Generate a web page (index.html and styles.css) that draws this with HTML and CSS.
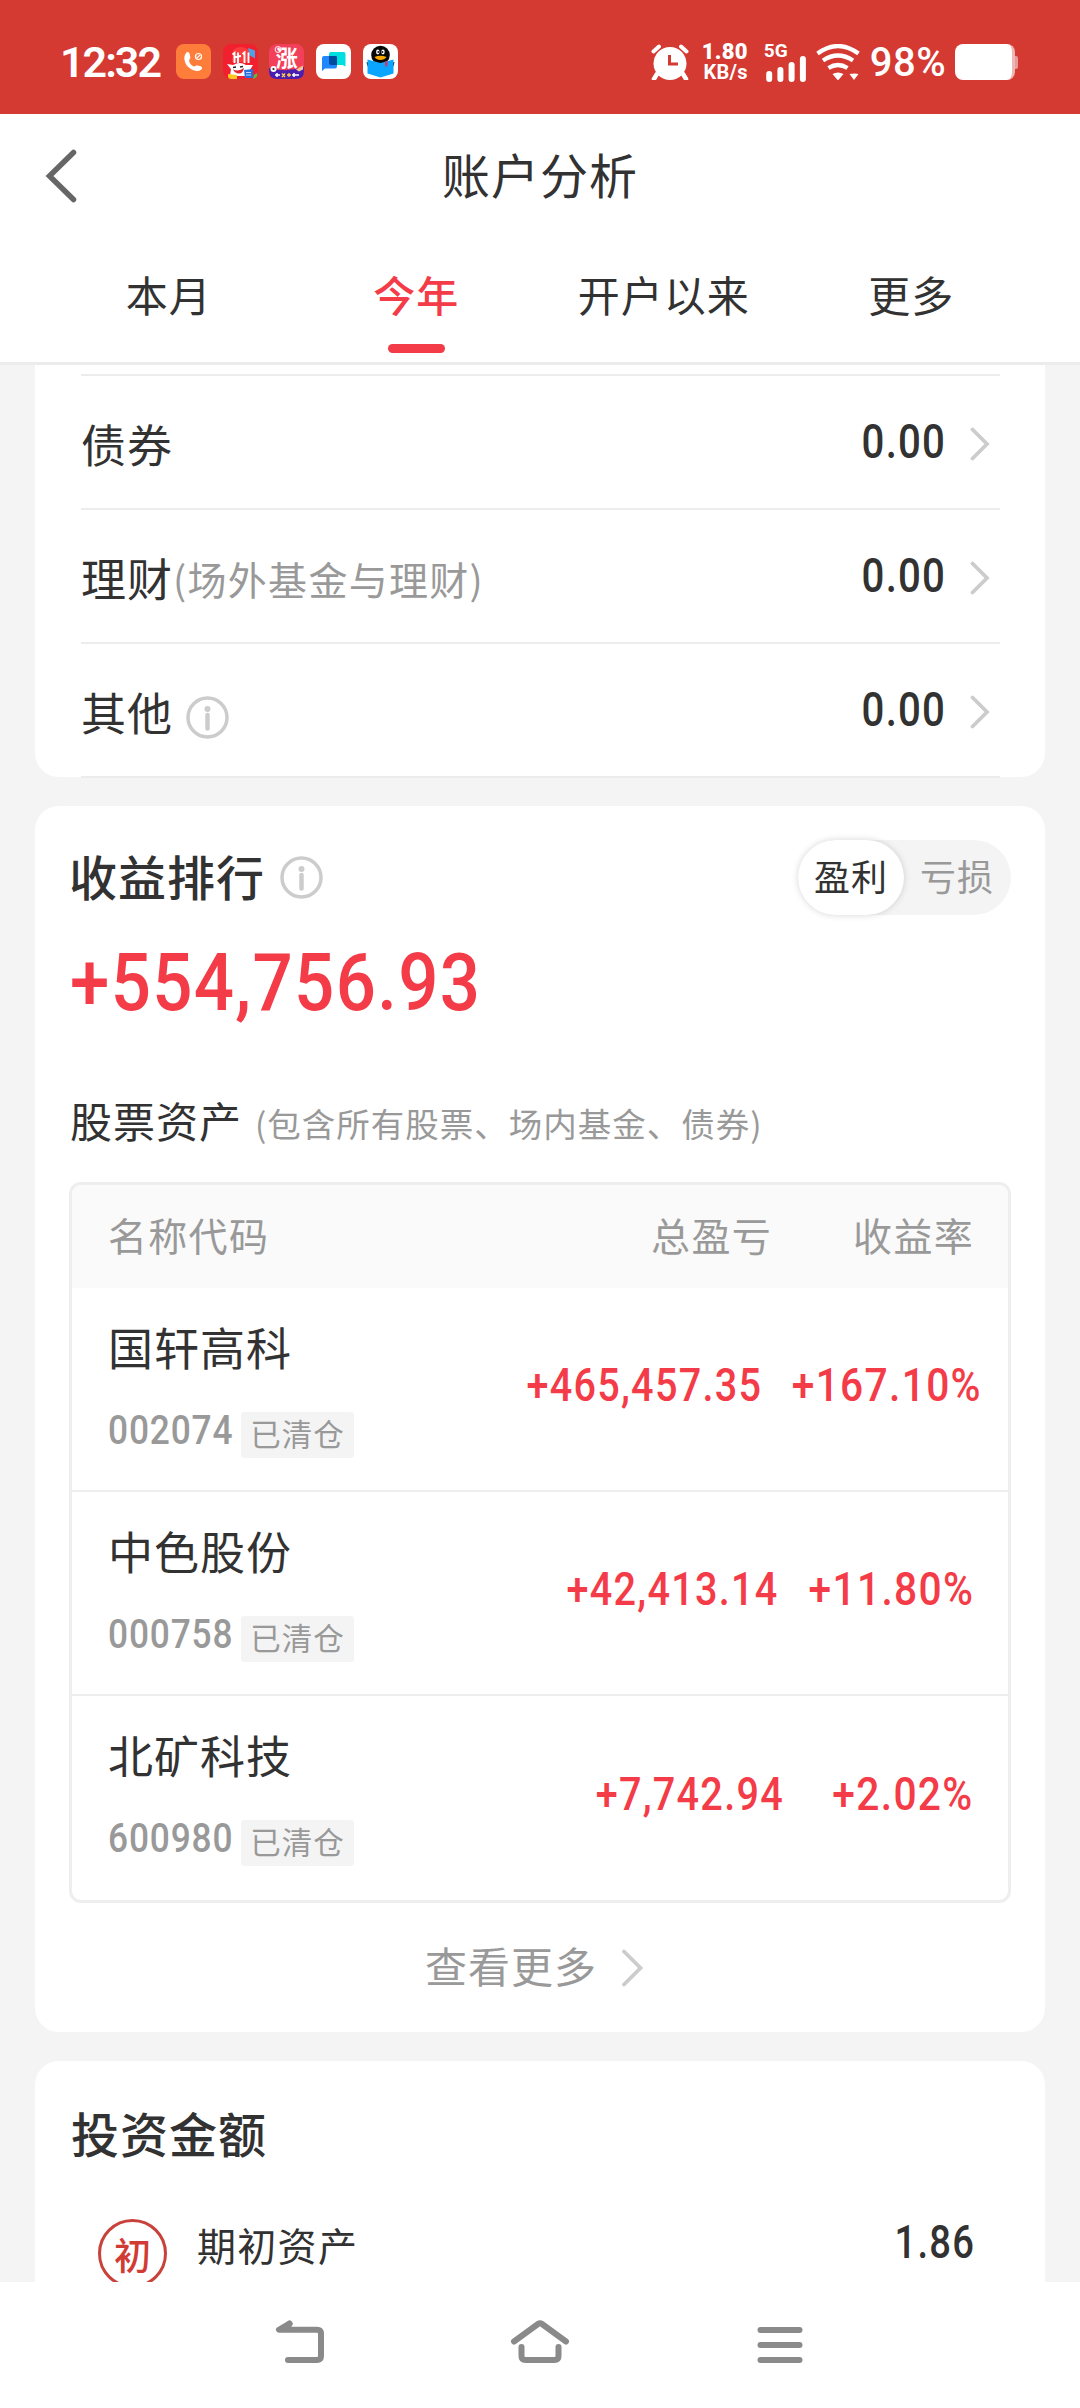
FILE: index.html
```html
<!DOCTYPE html>
<html lang="zh-CN">
<head>
<meta charset="utf-8">
<title>账户分析</title>
<link rel="stylesheet" href="styles.css">
</head>
<body>
<div class="screen">
  <header class="status">
    <span class="clock">12:32</span>
    <div class="apps">
      <svg viewBox="0 0 35 35"><rect width="35" height="35" rx="8" fill="#ff7d3a"/><path d="M10.500 8.500c1.700-1.100 2.900.2 3.300 1.900l.5 3.200c.1 1.500-1.500 2-1.200 3.300.6 2.800 2.600 4.800 5 5.500 1.200.3 2-1.300 3.300-1l3.300.9c1.600.7 1.900 2.300.5 3.400-2.800 2-7.200 1.500-11.300-1.400C8.300 20.800 6.500 12.400 10.500 8.500z" fill="#fff"/><circle cx="22.500" cy="12.500" r="3" fill="none" stroke="#fff" stroke-width="1.200"/><path d="M20.800 14.200l3.400-3.400" stroke="#fff" stroke-width="1.200"/></svg>
      <svg viewBox="0 0 35 35"><rect width="35" height="35" rx="8" fill="#f0202f"/><path d="M10 6q7-6 16 0v12H9z" fill="#ff3a3a"/><path d="M25 4l7 2.500v8l-5-3z" fill="#4aa3e8"/><path d="M9.500 10.500l2-1.500v10M15 19V8.500M19.500 10l2-1.500v10.500M25.500 19V8.500M12 13l6-1" stroke="#fff" stroke-width="1.900" fill="none"/><path d="M4 20l6 1q7-4 13 0l7 0-3 5 1 6H7l1-7z" fill="#fff"/><path d="M10 25.500q6 2.500 11-1.500-1 5.500-5 5.500t-6-4z" fill="#e0252d"/><path d="M10 23.500l3-.5M17 23l3-.5" stroke="#222" stroke-width="1.500"/><path d="M5 30l9 1v4H8q-3 0-3-3z" fill="#ffc820"/><path d="M21 26l9-1v9h-8z" fill="#2a6fe0"/><path d="M23 28.500h5M23 31h5" stroke="#bcd8ff"/><path d="M31 31l3-2q1 5-4 6z" fill="#55c040"/></svg>
      <svg viewBox="0 0 35 35"><rect width="35" height="35" rx="8" fill="#f2405a"/><path d="M0 24q17 5 35-1v4q0 8-8 8H8q-8 0-8-8z" fill="#4a1fb0"/><circle cx="9" cy="5.500" r="2.800" fill="none" stroke="#ffd0d4" stroke-width="1.200"/><text x="6.800" y="22" class="icon-word">涨</text><circle cx="4.500" cy="25" r="3" fill="#fff"/><circle cx="4.500" cy="25" r="1.100" fill="#222"/><path d="M27 25.500l7-4v4l-4 2z" fill="#ffc58a"/><path d="M6 31h5M23 31h7M8 29v4M25 29v4" stroke="#fff" stroke-width="1.500"/><path d="M13 29.500l3 3.500M16 29.500l-3 3.500M18 31h4M20 29v4" stroke="#ffd23c" stroke-width="1.300"/></svg>
      <svg viewBox="0 0 35 35"><rect width="35" height="35" rx="8" fill="#fff"/><path d="M15 8h12.500q2 0 2 2v12.500l-3-1.500H15q-2 0-2-2v-9q0-2 2-2z" fill="#00dfe0"/><path d="M8 12h13v10q0 2.500-2 2.500H9L6 27V14q0-2 2-2z" fill="#2187ff"/><path d="M13 12h6.500q1.500 0 1.500 1.500V21h-6q-2 0-2-2z" fill="#004b9b"/></svg>
      <svg viewBox="0 0 35 35"><rect width="35" height="35" rx="8" fill="#fff"/><circle cx="17.500" cy="11" r="9.300" fill="#080808"/><path d="M3.500 18l3 1v4l-2-1zM31.500 18l-3 1v4l2-1z" fill="#080808"/><ellipse cx="14.800" cy="8" rx="1.700" ry="2.400" fill="#fff"/><ellipse cx="20" cy="8" rx="1.700" ry="2.400" fill="#fff"/><circle cx="15.300" cy="8" r=".9" fill="#111"/><circle cx="19.500" cy="8" r=".9" fill="#111"/><path d="M11.500 13q6-2.500 12 0-2 3-6 3t-6-3z" fill="#ffa800"/><path d="M4.500 15.500l13 3.500 13-3.500v14l-13 4-13-4z" fill="#0aa5ff"/><path d="M22 17.500l2.500-.7v6l-1.200-1-1.300 1.500z" fill="#c43b72"/></svg>
    </div>
    <svg class="alarm" viewBox="0 0 38 36"><circle cx="19" cy="19.500" r="16.500" fill="#fff"/><path d="M6 30l-3 5M32 30l3 5" stroke="#fff" stroke-width="4.500" stroke-linecap="round"/><path d="M2.500 7.500L8 2.500M35.500 7.500L30 2.500" stroke="#fff" stroke-width="4" stroke-linecap="round"/><path d="M18.500 11v9H27" fill="none" stroke="#d43932" stroke-width="3"/></svg>
    <div class="speed"><b>1.80</b><span>KB/s</span></div>
    <div class="cell"><b>5G</b><svg viewBox="0 0 41 26"><path d="M3.200 18v5M14.400 14v9M25.600 9v14M36.900 3v20" stroke="#fff" stroke-width="6" stroke-linecap="round"/></svg></div>
    <svg class="wifi" viewBox="0 0 44 36"><g fill="none" stroke="#fff" stroke-width="4.200"><path d="M1.500 9.500Q22-5.500 42.500 9.500"/><path d="M7 16.500q15-10 30 0"/><path d="M12.500 24q9.500-6 19 0"/></g><path d="M16.500 30q5.500-3 11 0l-5.500 6.500zM33.500 30q5-1 9 0l-4.500 6z" fill="#fff"/></svg>
    <span class="percent">98%</span>
    <div class="battery"></div>
  </header>

  <div class="titlebar">
    <svg class="back" viewBox="0 0 32 54"><path d="M28.500 3.500L4.500 27l24 23.500" fill="none" stroke="#666" stroke-width="5.500" stroke-linecap="round"/></svg>
    <h1>账户分析</h1>
  </div>
  <nav class="tabs">
    <a>本月</a><a class="on">今年</a><a>开户以来</a><a>更多</a>
  </nav>

  <main class="content">
    <section class="card assets">
      <div class="asset"><span class="name">债券</span><span class="num">0.00</span><svg class="go" viewBox="0 0 20 34"><path d="M2.500 2.500L17 17 2.500 31.500"/></svg></div>
      <div class="asset"><span class="name">理财</span><span class="hint">(场外基金与理财)</span><span class="num">0.00</span><svg class="go" viewBox="0 0 20 34"><path d="M2.500 2.500L17 17 2.500 31.500"/></svg></div>
      <div class="asset"><span class="name">其他</span><svg class="info" viewBox="0 0 43 43"><circle cx="21.500" cy="21.500" r="19.500"/><path d="M21.500 19v13.500"/><circle class="dot" cx="21.500" cy="13" r="3"/></svg><span class="num">0.00</span><svg class="go" viewBox="0 0 20 34"><path d="M2.500 2.500L17 17 2.500 31.500"/></svg></div>
    </section>

    <section class="card rank">
      <div class="rank-head">
        <h2>收益排行</h2>
        <svg class="info" viewBox="0 0 43 43"><circle cx="21.500" cy="21.500" r="19.500"/><path d="M21.500 19v13.500"/><circle class="dot" cx="21.500" cy="13" r="3"/></svg>
        <div class="toggle"><span class="on">盈利</span><span>亏损</span></div>
      </div>
      <div class="total"><span class="num">+554,756.93</span></div>
      <div class="sub"><h3>股票资产</h3><span>(包含所有股票、场内基金、债券)</span></div>
      <div class="table">
        <div class="thead"><span>名称代码</span><span>总盈亏</span><span>收益率</span></div>
        <div class="row">
          <div class="stock"><p>国轩高科</p><div><span class="code">002074</span><em>已清仓</em></div></div>
          <div class="gain wide"><span class="num">+465,457.35</span></div><div class="rate wide"><span class="num">+167.10%</span></div>
        </div>
        <div class="row">
          <div class="stock"><p>中色股份</p><div><span class="code">000758</span><em>已清仓</em></div></div>
          <div class="gain mid"><span class="num">+42,413.14</span></div><div class="rate"><span class="num">+11.80%</span></div>
        </div>
        <div class="row">
          <div class="stock"><p>北矿科技</p><div><span class="code">600980</span><em>已清仓</em></div></div>
          <div class="gain"><span class="num">+7,742.94</span></div><div class="rate"><span class="num">+2.02%</span></div>
        </div>
      </div>
      <div class="more"><span>查看更多</span><svg class="go" viewBox="0 0 23 38"><path d="M3 2.500L19.500 19 3 35.500"/></svg></div>
    </section>

    <section class="card invest">
      <h2>投资金额</h2>
      <div class="item"><span class="badge">初</span><span class="label">期初资产</span><span class="num">1.86</span></div>
    </section>
  </main>

  <footer class="sysnav">
    <svg viewBox="0 0 60 44"><path d="M19.500 4.500L9 10.800H47q4 0 4 4V37q0 4-4 4H18"/><path d="M19.500 5L16 10"/></svg>
    <svg viewBox="0 0 60 44"><path d="M4 22.500L28 5q2-1.500 4 0L56 22.500M11.500 28V37q0 4 4 4h29q4 0 4-4V28"/></svg>
    <svg viewBox="0 0 60 44"><path d="M10.500 11h39M10.500 26h39M10.500 41h39"/></svg>
  </footer>
</div>
</body>
</html>
```
FILE: styles.css
```css
* { box-sizing: border-box; margin: 0; padding: 0; }
body { background: #fff; color: #323232; font-family: "Noto Sans CJK SC", sans-serif; }
h1, h2, h3, em { font-style: normal; font-weight: 400; }
svg { display: block; flex: none; }
span, h1, h2, h3, p, a { white-space: nowrap; }
.screen { width: 1080px; height: 2408px; display: flex; flex-direction: column; overflow: hidden; }

.status { height: 114px; flex: none; background: #d43932; color: #fff; display: flex; align-items: flex-start; padding: 44px 60px 0 60px; font-family: Roboto, sans-serif; }
.clock { width: 116px; font-size: 43px; line-height: 36px; font-weight: 600; letter-spacing: -2px; }
.apps { display: flex; gap: 11.700px; }
.apps svg { width: 35px; height: 35px; overflow: visible; }
.icon-word { font: 700 22px "Noto Sans CJK SC", sans-serif; fill: #fff; }
.alarm { width: 38px; height: 36px; margin-left: 253px; }
.speed { width: 46px; margin-left: 13px; display: flex; flex-direction: column; align-items: flex-end; font-size: 22px; line-height: 20px; font-weight: 700; margin-top: -2px; letter-spacing: .3px; }
.speed span { font-size: 20px; }
.cell { width: 42px; margin-left: 16px; margin-top: -2px; }
.cell b { display: block; font-size: 19px; line-height: 18px; }
.cell svg { width: 41px; height: 26px; margin: -4px 0 0 2px; }
.wifi { width: 44px; height: 36px; margin-left: 10px; }
.percent { width: 86px; margin-left: 10px; font-size: 40px; line-height: 37px; font-weight: 500; letter-spacing: .5px; margin-right: -1px; }
.battery { width: 60px; height: 36px; flex: none; border-radius: 8px; background: #fff; border-right: 3px solid #efb7b4; position: relative; }
.battery::after { content: ""; position: absolute; right: -6px; top: 12px; width: 3px; height: 13px; background: #e69c98; border-radius: 0 2px 2px 0; }

.titlebar { height: 124px; flex: none; display: grid; grid-template-columns: 76px 1fr 76px; align-items: center; }
.back { width: 32px; height: 54px; margin-left: 45px; }
h1 { text-align: center; font-size: 48px; letter-spacing: 1px; padding-bottom: 6px; }
.tabs { height: 127px; flex: none; border-bottom: 3px solid #ececec; padding: 0 45px; display: grid; grid-template-columns: repeat(4, 1fr); }
.tabs a { display: flex; flex-direction: column; align-items: center; font-size: 42px; letter-spacing: 1px; line-height: 60px; padding-top: 26px; }
.tabs .on { color: #f43b48; font-weight: 500; }
.tabs .on::after { content: ""; width: 57px; height: 9px; border-radius: 5px; background: #f43b48; margin-top: 20px; }

.content { flex: 1; min-height: 0; overflow: hidden; background: #f4f4f4; padding: 0 35px; display: flex; flex-direction: column; gap: 29px; }
.card { background: #fff; border-radius: 24px; flex: none; }
.num { font-family: Roboto, sans-serif; font-weight: 500; font-size: 49px; display: inline-block; transform: scaleX(.86); transform-origin: right center; letter-spacing: 1.500px; }
.assets { height: 412px; border-radius: 0 0 24px 24px; padding: 9px 45px 0 46px; }
.asset { height: 134px; border-top: 2px solid #ececec; display: flex; align-items: center; padding: 0 10px 0 0; }
.asset:last-child { border-bottom: 2px solid #ececec; height: 136px; }
.asset .name { font-size: 45px; letter-spacing: 1px; padding-top: 2px; }
.asset .hint { font-size: 39px; letter-spacing: 1.300px; color: #999; padding-top: 4px; }
.asset .num { margin-left: auto; padding-bottom: 2px; transform: scaleX(.82); }
.asset .go { width: 20px; height: 34px; margin: 3px 0 0 24px; }
.go path { fill: none; stroke: #ccc; stroke-width: 3.800; stroke-linecap: round; }
.info { width: 43px; height: 43px; fill: none; stroke: #ccc; stroke-width: 3.500; stroke-linecap: round; }
.info path { stroke-width: 4.500; }
.info .dot { fill: #ccc; stroke: none; }
.asset .info { margin: 14px 0 0 13px; }

h2 { font-size: 48px; font-weight: 500; letter-spacing: 1px; }
.rank { height: 1226px; padding: 34px 34px 0; }
.rank-head { height: 75px; display: flex; align-items: center; }
.rank-head h2 { padding-bottom: 6px; }
.rank-head .info { margin-left: 15px; }
.toggle { margin-left: auto; width: 213px; height: 75px; border-radius: 38px; background: #f4f4f4; display: flex; font-size: 36px; letter-spacing: 1px; color: #999; }
.toggle span { width: 106px; display: flex; align-items: center; justify-content: center; padding-bottom: 5px; }
.toggle .on { background: #fff; color: #323232; border-radius: 38px; box-shadow: 0 0 7px rgba(0,0,0,.16); }
.total { height: 138px; padding: 18px 0 0 1px; color: #f43b48; }
.total .num { font-size: 80px; line-height: 100px; transform: scaleX(.885); transform-origin: left center; }
.sub { height: 129px; display: flex; align-items: center; padding: 4px 0 0 1px; }
.sub h3 { font-size: 42px; letter-spacing: 1px; }
.sub span { font-size: 33.500px; letter-spacing: 1px; color: #999; margin-left: 13px; padding-top: 5px; }
.table { height: 721px; border: 3px solid #eee; border-radius: 12px; overflow: hidden; }
.thead { height: 103px; background: #fafafa; color: #999; font-size: 39px; letter-spacing: 1.300px; display: grid; grid-template-columns: 1fr 203px 202px; align-items: center; padding: 0 34px 6px 36px; text-align: right; }
.thead span:first-child { text-align: left; }
.row { height: 204px; display: grid; grid-template-columns: 1fr 235px 194px; border-bottom: 2px solid #eee; padding: 0 36px; }
.row:last-child { border-bottom: 0; }
.stock p { font-size: 45px; letter-spacing: 1px; line-height: 66px; margin-top: 26px; }
.stock div { display: flex; align-items: flex-start; margin-top: 32px; }
.code { width: 133px; font: 500 41px/36px Roboto, sans-serif; letter-spacing: 1px; color: #999; transform: scaleX(.86); transform-origin: left; }
.stock em { width: 113px; height: 46px; background: #f4f4f4; color: #999; border-radius: 3px; font-size: 30.500px; letter-spacing: 1px; line-height: 43px; text-align: center; }
.row .num { font-size: 46px; }
.gain, .rate { color: #f43b48; display: flex; justify-content: flex-end; align-items: center; padding-bottom: 8px; }
.gain { margin-right: -6px; }
.gain.mid { margin-right: -1px; }
.gain.wide { margin-right: 16px; }
.rate { margin-right: -2px; }
.rate.wide { margin-right: -10px; }
.row .rate .num { transform: scaleX(.885); }
.more { height: 129px; display: flex; justify-content: center; align-items: center; font-size: 42px; letter-spacing: 1px; color: #999; padding-right: 11px; }
.more span { padding-bottom: 6px; }
.more .go { width: 23px; height: 38px; margin-left: 24px; }

.invest { height: 400px; padding: 36px 36px 0; border-radius: 24px 24px 0 0; }
.invest h2 { line-height: 70px; }
.item { display: flex; align-items: flex-start; padding: 52px 34px 0 27px; }
.badge { width: 69px; height: 69px; border: 3px solid #c9413b; border-radius: 50%; color: #d23b34; font-size: 37px; font-weight: 500; line-height: 65px; text-align: center; }
.label { font-size: 39px; letter-spacing: 1.300px; line-height: 56px; margin: -3px 0 0 30px; }
.item .num { margin-left: auto; font-size: 46px; line-height: 46px; transform: scaleX(.83); }

.sysnav { height: 126px; flex: none; background: #fff; display: flex; justify-content: center; gap: 180px; padding-top: 37px; }
.sysnav svg { width: 60px; height: 44px; fill: none; stroke: #8a8a8a; stroke-width: 6; stroke-linecap: round; stroke-linejoin: round; overflow: visible; }
```
